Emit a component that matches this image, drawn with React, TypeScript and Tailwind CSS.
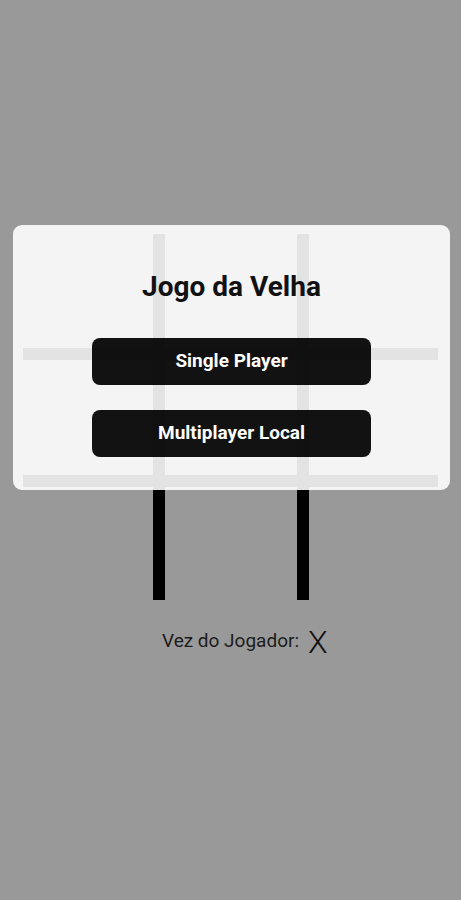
import React from "react";

const cells = Array.from({ length: 9 });

const App: React.FC = () => {
  return (
    <div
      className="relative h-[900px] w-full bg-[#999999] flex flex-col items-center pt-[234px]"
      style={{ fontFamily: "Roboto, 'Liberation Sans', sans-serif" }}
    >
      {/* board */}
      <div className="grid grid-cols-[130px_132px_130px] grid-rows-[114px_115px_113px] gap-x-[12px] gap-y-[12px] bg-black w-[415px] h-[366px]">
        {cells.map((_, i) => (
          <div key={i} className="bg-[#999999]" />
        ))}
      </div>

      {/* current player */}
      <div className="grid grid-cols-[1fr_auto_1fr] items-center w-full mt-[24px]">
        <div />
        <p className="text-[19px] text-[#1c1c1c] leading-[24px]">Vez do Jogador:</p>
        <span className="text-[32px] font-light text-[#111] leading-[32px] ml-[9px] mt-[2px] justify-self-start">
          X
        </span>
      </div>

      {/* menu modal */}
      <div className="absolute left-[13px] top-[225px] w-[437px] h-[265px] rounded-[9px] bg-[rgba(255,255,255,0.89)] flex flex-col items-center">
        <h1 className="mt-[47px] text-[28px] font-bold text-[#111] leading-[30px]">Jogo da Velha</h1>
        <div className="flex flex-col gap-[25px] mt-[36px]">
          <button className="w-[279px] h-[47px] rounded-[8px] bg-[rgba(0,0,0,0.93)] text-white text-[19px] font-bold">
            Single Player
          </button>
          <button className="w-[279px] h-[47px] rounded-[8px] bg-[rgba(0,0,0,0.93)] text-white text-[19px] font-bold">
            Multiplayer Local
          </button>
        </div>
      </div>
    </div>
  );
};

export default App;
